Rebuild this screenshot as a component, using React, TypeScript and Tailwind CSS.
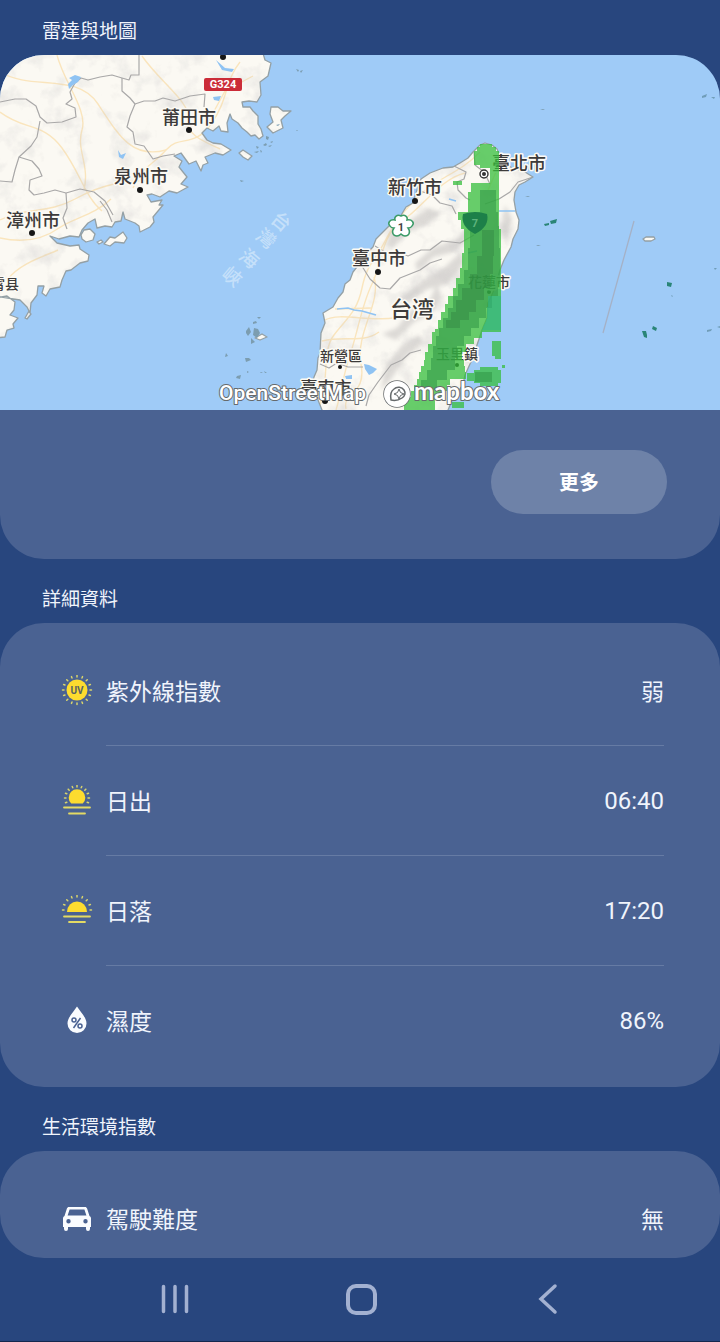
import type { ReactNode } from "react";

const labels = [
  { text: "莆田市", x: 189, y: 124, size: 18 },
  { text: "泉州市", x: 141, y: 183, size: 18 },
  { text: "漳州市", x: 33, y: 227, size: 18 },
  { text: "霄县", x: 5, y: 289, size: 14 },
  { text: "新竹市", x: 415, y: 194, size: 18 },
  { text: "臺中市", x: 379, y: 265, size: 18 },
  { text: "台湾", x: 412, y: 317, size: 22 },
  { text: "新營區", x: 341, y: 361, size: 14 },
  { text: "臺南市", x: 326, y: 394, size: 17 },
  { text: "臺北市", x: 519, y: 170, size: 18 },
  { text: "花蓮市", x: 489, y: 287, size: 14 },
  { text: "玉里鎮", x: 457, y: 359, size: 14 },
];

const dots = [
  [223, 57, 3],
  [189, 130, 3],
  [140, 190, 3],
  [32, 233, 3],
  [415, 201, 3],
  [378, 272, 3],
  [340, 367, 2],
  [325, 401, 3],
  [489, 292, 2],
  [457, 365, 2],
];

const strait = [
  { text: "台", x: 281, y: 222 },
  { text: "灣", x: 266, y: 239 },
  { text: "海", x: 249, y: 259 },
  { text: "峽", x: 232, y: 277 },
];

// rain cells: x, y, width, height
const lightRain = [
  [480, 144, 12, 3], [477, 147, 19, 4], [474, 151, 25, 14], [480, 165, 19, 3],
  [490, 168, 9, 15], [453, 181, 9, 4], [471, 183, 28, 9], [468, 192, 31, 20],
  [458, 212, 41, 8], [461, 220, 38, 9], [464, 229, 37, 24], [462, 253, 39, 15],
  [460, 268, 41, 10], [456, 278, 45, 10], [453, 288, 48, 8], [448, 296, 53, 8],
  [445, 304, 56, 8], [441, 312, 60, 8], [438, 320, 63, 9], [435, 329, 66, 3],
  [432, 332, 50, 6], [432, 338, 42, 6], [428, 344, 38, 8], [425, 352, 37, 8],
  [424, 360, 40, 6], [421, 366, 44, 6], [419, 372, 47, 7], [417, 379, 33, 6],
  [414, 385, 33, 6], [411, 391, 30, 6], [408, 397, 27, 6], [404, 403, 31, 7],
  [492, 341, 9, 15], [495, 356, 6, 3], [474, 370, 27, 13], [467, 373, 7, 8],
  [480, 367, 18, 3], [480, 383, 18, 3], [452, 402, 12, 6], [502, 365, 3, 3],
];

const midRain = [
  [480, 190, 16, 22], [474, 212, 24, 14], [470, 226, 29, 22], [468, 248, 32, 22],
  [464, 270, 36, 14], [458, 284, 40, 12], [453, 296, 39, 12], [448, 308, 38, 10],
  [443, 318, 36, 10], [439, 328, 32, 8], [436, 336, 28, 10], [433, 346, 24, 12],
  [431, 358, 24, 12], [427, 370, 20, 10], [421, 380, 16, 10], [475, 372, 17, 10],
];

const heavyRain = [
  [482, 230, 12, 26], [477, 256, 16, 18], [470, 274, 20, 14], [462, 288, 22, 12],
  [456, 300, 20, 12], [451, 312, 18, 8], [446, 320, 14, 8],
];

const islets = [
  "M296 69l3 1-1 2z", "M300 71l3-1-2 3z", "M266 136l3 1-1 3-2-1z", "M270 142l3-1-1 2z",
  "M256 146l3 1-2 2z", "M260 150l2 1-1 2z", "M240 180l4 1-3 1z", "M276 125l4-1-2 2z",
  "M296 130l2 0-1 1z", "M254 152l5-1-2 2z", "M263 145l3-2 1 2-2 1z", "M268 146l4-1-2 2z",
  "M226 353l2 3-3 1z", "M245 358l4 0 2 2-5 2z", "M237 376l4-1-1 4-4-1z",
  "M247 371l2 1-2 1z", "M260 372l3 0-2 1z", "M264 371l3 2-2 0z",
  "M257 317l4 0-2 2z", "M253 322l3-1 1 2-4 1z", "M246 331l3-4 2 5-3 4-2-3z",
  "M254 328l4 1 2 4-3 5-4-3z", "M251 338l4 4-4 2z",
  "M525 196l5 0-2 1z", "M536 245l5 0-3 1z", "M540 109l5 0-2 1z",
];

const mainland =
  "M-5 50H262L265 60 271 63 268 76 260 82 261 95 257 102 249 101 242 102 243 107 250 107 253 111 258 116 258 124 261 129 263 136 259 139 255 135 251 136 247 132 242 128 238 123 232 119 230 114 227 123 228 132 221 131 219 126 213 131 207 128 202 133 207 140 213 143 221 144 231 150 223 155 215 153 205 157 208 163 203 165 201 171 196 161 189 164 181 153 174 156 182 161 179 167 187 177 181 184 188 187 177 193 169 191 160 197 152 194 147 195 151 202 162 200 159 205 163 205 153 217 154 222 150 227 140 232 139 226 135 223 125 219 123 212 121 221 115 222 112 227 105 226 97 228 95 219 88 223 82 230 79 237 70 236 59 239 50 236 57 243 70 246 79 245 80 249 89 255 88 261 80 263 71 270 66 271 62 280 60 287 50 289 46 296 42 293 44 286 38 286 37 295 31 303 30 313 27 307 20 300 -5 296Z";
const peninsula =
  "M-5 298L7 296 15 302 14 310 10 315 18 318 13 324 14 328 7 330 5 337 -5 338Z";
const taiwan =
  "M485 143L492 145 497 149 502 160 512 168 525 172 533 177 525 182 519 185 515 192 514 200 516 212 519 220 518 229 513 239 511 247 504 260 500 270 495 288 488 303 487 318 482 330 477 345 474 356 470 364 465 375 463 385 453 398 446 415 324 415 318 400 317 393 312 386 314 377 317 370 318 358 320 353 321 333 325 323 323 313 333 307 338 298 343 292 345 284 350 280 353 272 360 263 367 253 373 247 376 239 382 233 390 225 400 217 406 207 413 203 417 190 421 179 430 173 443 168 453 167 460 163 468 158 473 152 480 145Z";
const isles = [
  "M81 235L84 230 90 229 95 234 93 240 86 242 82 239Z",
  "M104 244L110 237 115 238 123 232 127 238 124 243 115 242 110 246Z",
  "M97 242L101 240 103 242 99 244Z",
  "M267 127L273 122 270 114 271 107 278 107 283 111 291 111 285 116 281 120 283 128 273 133Z",
  "M239 153L243 150 252 156 248 160 243 157Z",
  "M25 318L29 311 31 314 27 319Z",
  "M255 338L262 334 267 337 260 340Z",
  "M643 239L646 237 654 237 655 239 651 241 645 241Z",
];
const landPath = [mainland, peninsula, taiwan, ...isles].join("");

const borders = [
  "M139 55V75H131L129 80 122 78 112 75 100 77 88 80 81 78 75 83 70 92 72 99 66 104 75 108 76 117 62 122 47 123 40 117 36 106 26 99 15 99 0 102",
  "M40 121L37 137 31 146 19 157 15 170 12 182 0 181",
  "M19 157L32 161 39 169 42 176 30 180 29 190 34 195 44 193 55 190 66 193 80 189 94 192 105 201 113 215",
  "M122 78L122 91 130 98 135 104 130 116 127 127 133 132 135 144 144 146 153 159 163 156 175 154",
  "M135 104L144 101 155 101 163 98 175 101 190 96 205 94 204 107",
  "M66 193L67 208 63 218 67 229", "M100 201L107 210 112 222",
  "M454 166L466 172 464 179 457 182 458 190 466 198 470 200",
  "M417 190L432 195 440 203 452 206 456 214",
  "M533 177L518 182 510 192 499 199 485 204",
  "M375 246L385 252 398 252 408 256 421 250 430 250 442 241 460 243 474 235",
  "M360 263L370 279 380 288 390 289 400 278 420 270 430 263 442 259",
  "M320 364L329 368 337 363 348 367 363 367",
  "M421 350L410 353 402 360 391 365 378 382 369 395 366 406",
  "M474 152L475 165 484 172 490 184",
];

const roads = [
  "M0 112C25 131 43 122 62 148S85 197 102 211M57 55C64 83 88 110 82 130S90 165 84 190M0 220C25 207 48 214 75 199S128 180 146 181",
  "M240 62C224 82 229 99 211 124S180 134 166 150 141 167 133 188M142 56C160 82 192 104 188 119S205 142 220 149M253 76L225 91 206 126",
  "M0 238C27 244 45 238 59 228S95 215 111 199M8 279C20 263 45 256 58 250M0 72C32 91 77 72 98 104S132 159 166 150",
  "M480 152C460 173 439 177 421 194S394 224 384 243 367 264 362 288 347 318 334 335 330 379 320 405",
  "M465 173C440 179 423 207 402 221S382 264 372 284 358 331 350 355 342 391 336 410M374 277C382 303 355 333 361 364S342 392 346 409",
  "M325 320C342 311 375 325 407 315M322 341C346 335 362 344 379 332M500 163L488 190M335 309L371 308",
];

const ridges = [
  "M390 232L408 222 428 208 441 213 426 225 408 232 393 248 386 245Z",
  "M415 263L434 247 455 241 474 221 475 230 454 252 433 257 418 272Z",
  "M401 298L423 280 444 268 462 251 464 263 448 284 427 289 410 302Z",
  "M382 334L397 328 410 311 430 300 437 284 442 298 430 314 414 322 396 340Z",
  "M386 366L402 345 419 335 423 343 407 356 391 379 381 390Z",
  "M468 352L478 338 482 326 474 355 465 370Z",
  "M505 205L512 219 507 243 501 231Z",
];

function RadarMap() {
  return (
    <svg
      viewBox="0 55 720 355"
      className="block h-auto w-full font-['Roboto','Noto_Sans_CJK_TC',sans-serif]"
      role="img"
      aria-label="雷達與地圖"
    >
      <defs>
        <clipPath id="land">
          <path d={landPath} />
        </clipPath>
        <filter id="relief" x="0" y="0" width="100%" height="100%">
          <feTurbulence type="fractalNoise" baseFrequency="0.045" numOctaves="4" seed="8" />
          <feColorMatrix values="0 0 0 0 0.58  0 0 0 0 0.57  0 0 0 0 0.58  2.6 0 0 0 -1.3" />
        </filter>
        <filter id="soft">
          <feGaussianBlur stdDeviation="2" />
        </filter>
      </defs>
      <rect y="55" width="720" height="355" fill="#9fcbf7" />
      <path d={landPath} fill="#fbf9f3" />
      <g clipPath="url(#land)">
        <g fill="none" stroke="#fae5bd" strokeWidth="1.4">
          {roads.map((d) => (
            <path key={d} d={d} />
          ))}
        </g>
        <g fill="#bdbab9" opacity="0.5" filter="url(#soft)">
          {ridges.map((d) => (
            <path key={d} d={d} />
          ))}
        </g>
        <rect y="55" width="560" height="355" filter="url(#relief)" opacity="0.4" />
        <g fill="none" stroke="#a9a8a8" strokeWidth="1.2" strokeLinejoin="round">
          {borders.map((d) => (
            <path key={d} d={d} />
          ))}
        </g>
        <g fill="#8fc3f3">
          <path d="M69 78l6-3 6 2-3 5-5 3-4 4-1-5 4-4zM118 150l3 5 5-2-3 6-4-2zM213 97l8-1-2 5-5-1zM364 364l5 1 8 4-4 4-4 2-4-6zM345 376l7-1 0 4-6 0zM216 60l9 8 9 1-2 3-10-2z" />
        </g>
        <path d="M337 309l11-1 6 2 8 1 14 4M499 211h16M449 199l7 2M468 253l9-2" fill="none" stroke="#8fc3f3" strokeWidth="1.6" />
      </g>
      <path d={landPath} fill="none" stroke="#94a0a5" strokeWidth="1.3" strokeLinejoin="round" />
      <g fill="#7c9db0">
        {islets.map((d) => (
          <path key={d} d={d} />
        ))}
      </g>
      <path d="M634 221L603 333" stroke="#a5b1c6" strokeWidth="1.3" />

      <g
        fill="#c5e0fa"
        fontSize="19"
        fontWeight="500"
        textAnchor="middle"
        dominantBaseline="central"
      >
        {strait.map((s) => (
          <text key={s.text} x={s.x} y={s.y} transform={`rotate(40 ${s.x} ${s.y})`}>
            {s.text}
          </text>
        ))}
      </g>

      <g>
        {dots.map(([x, y, r]) => (
          <circle key={`${x}-${y}`} cx={x} cy={y} r={r} fill="#161616" />
        ))}
        <circle cx="484" cy="174" r="4" fill="#fff" stroke="#333" strokeWidth="1.4" />
        <circle cx="484" cy="174" r="2" fill="#333" />
      </g>
      <g
        fill="#3d3b3a"
        stroke="#fcfaf4"
        strokeWidth="3"
        strokeLinejoin="round"
        paintOrder="stroke"
        fontWeight="500"
        textAnchor="middle"
      >
        {labels.map((l) => (
          <text key={l.text} x={l.x} y={l.y} fontSize={l.size}>
            {l.text}
          </text>
        ))}
      </g>

      {/* road shields */}
      <rect x="204" y="78" width="38" height="13" rx="2" fill="#cb2c38" />
      <text x="223" y="88" fontSize="11" fontWeight="700" fill="#fff" textAnchor="middle">
        G324
      </text>
      <path
        d="M401 216c4-2 7 1 6 4 5-1 8 3 5 6-1 2-3 2-4 2 3 4 1 8-3 8-2 0-3-1-4-2-1 1-2 2-4 2-4 0-6-4-3-8-1 0-3 0-4-2-3-3 0-7 5-6-1-3 2-6 6-4z"
        fill="#fff"
        stroke="#3c9b68"
        strokeWidth="1.5"
      />
      <text x="401" y="231" fontSize="11" fontWeight="700" fill="#444" textAnchor="middle">
        1
      </text>

      {/* precipitation */}
      <g shapeRendering="crispEdges">
        <g fill="#35bd3c" fillOpacity="0.75">
          {lightRain.map(([x, y, w, h]) => (
            <rect key={`${x}-${y}`} x={x} y={y} width={w} height={h} />
          ))}
        </g>
        <g fill="#2f9645" fillOpacity="0.55">
          {midRain.map(([x, y, w, h]) => (
            <rect key={`${x}-${y}`} x={x} y={y} width={w} height={h} />
          ))}
        </g>
        <g fill="#2f7f40" fillOpacity="0.4">
          {heavyRain.map(([x, y, w, h]) => (
            <rect key={`${x}-${y}`} x={x} y={y} width={w} height={h} />
          ))}
        </g>
        <path d="M488 296H501V330H482L487 318Z" fill="#2fb68a" fillOpacity="0.5" />
      </g>
      <path d="M463 214q12-4 24 0c2 8-2 15-12 20-10-5-14-12-12-20z" fill="#1d8049" />
      <text x="475" y="227" fontSize="11" fontWeight="700" fill="#5db37c" textAnchor="middle">
        7
      </text>
      <g fill="#2a8577">
        <path d="M544 224l5-1 0 2-4 1zM550 221l7-2-1 4-5 1zM667 282l5 1-1 4-4-1zM653 326l4 2-1 3-4-2zM642 331l4 0 1 4 0 3-3-1z" />
      </g>
      <g fill="#709db8">
        <path d="M702 96l5-2-1 3-4 1zM711 97l4 0-1 2zM707 330l5-1-1 2-4 1zM717 327l3-1v2zM714 268l3 0-2 2zM671 295l2 1-1 1z" />
      </g>

      <g
        fill="#fff"
        stroke="#666a6c"
        strokeWidth="2"
        strokeLinejoin="round"
        paintOrder="stroke"
      >
        <a href="#openstreetmap">
          <text x="219" y="400" fontSize="21" fontWeight="500">
            OpenStreetMap
          </text>
        </a>
        <a href="#mapbox">
          <circle cx="397" cy="394" r="13" strokeWidth="1.5" />
          <text x="414" y="400" fontSize="24" fontWeight="700" fontFamily="Lato, sans-serif">
            mapbox
          </text>
        </a>
      </g>
      <path
        d="M391 400c-1-5 0-9 3-11 3-3 8-2 10 1 2 3 1 6-2 8-3 2-7 3-11 2z"
        fill="#fff"
        stroke="#666a6c"
        strokeWidth="1.5"
      />
      <path d="M399 389l1.500 3.500 3.500 1.500-3.500 1.500-1.500 3.500-1.500-3.500-3.500-1.500 3.500-1.500z" fill="none" stroke="#666a6c" />
    </svg>
  );
}

function Rays({ cy, r, from, to }: { cy: number; r: number; from: number; to: number }) {
  const steps = [];
  for (let i = from; i <= to; i++) steps.push(i);
  return (
    <g stroke="#d9d56c" strokeWidth="1.5" strokeLinecap="round">
      {steps.map((i) => (
        <path key={i} d={`M16 ${cy - r}v-1.500`} transform={`rotate(${i * 22.5} 16 ${cy})`} />
      ))}
    </g>
  );
}

function UvIcon() {
  return (
    <svg viewBox="0 0 32 32" className="size-8" aria-hidden="true">
      <Rays cy={15} r={13} from={0} to={15} />
      <circle cx="16" cy="15" r="10.500" fill="#fddc2f" />
      <text
        x="16"
        y="19"
        fontSize="10"
        fontWeight="700"
        fill="#5a6560"
        textAnchor="middle"
        fontFamily="Roboto, sans-serif"
      >
        UV
      </text>
    </svg>
  );
}

function SunriseIcon() {
  return (
    <svg viewBox="0 0 32 32" className="size-8" aria-hidden="true">
      <Rays cy={13} r={11} from={-5} to={5} />
      <path d="M10.200 18.500a8.300 8.300 0 1 1 11.600 0z" fill="#fddc2f" />
      <path d="M3 22.500h26M8 28.500h16" stroke="#e3da64" strokeWidth="1.800" strokeLinecap="round" />
    </svg>
  );
}

function SunsetIcon() {
  return (
    <svg viewBox="0 0 32 32" className="size-8" aria-hidden="true">
      <Rays cy={15} r={13} from={-4} to={4} />
      <path d="M6 17a10 10.500 0 0 1 20 0z" fill="#fddc2f" />
      <path d="M3 21.500h26M8 27h16" stroke="#e3da64" strokeWidth="1.800" strokeLinecap="round" />
    </svg>
  );
}

function HumidityIcon() {
  return (
    <svg viewBox="0 0 32 32" className="size-8" aria-hidden="true">
      <path d="M16 1.500c3.500 5.500 9.500 11 9.500 17a9.500 9.500 0 0 1-19 0c0-6 6-11.500 9.500-17z" fill="#fafcff" />
      <g fill="none" stroke="#4a6292" strokeWidth="1.500">
        <circle cx="13" cy="15" r="2" />
        <circle cx="19" cy="21" r="2" />
        <path d="M19.500 13l-7 10" />
      </g>
    </svg>
  );
}

function CarIcon() {
  return (
    <svg viewBox="0 0 32 32" className="size-8" aria-hidden="true">
      <path
        fillRule="evenodd"
        fill="#fafcff"
        d="M8 4h16c1 0 1.800.6 2.100 1.500L28.500 13c1 .6 1.500 1.500 1.500 2.500V24h-1v2a2 2 0 0 1-4 0v-2H7v2a2 2 0 0 1-4 0v-2H2v-8.500c0-1 .5-1.900 1.500-2.500L5.900 5.500C6.200 4.600 7 4 8 4zM8.600 6.500L6.600 12.500h18.800l-2-6zM7.500 16a2.200 2.200 0 1 0 0 4.400 2.200 2.200 0 0 0 0-4.400zM24.500 16a2.200 2.200 0 1 0 0 4.400 2.200 2.200 0 0 0 0-4.400z"
      />
    </svg>
  );
}

type RowProps = {
  icon: ReactNode;
  label: string;
  value: string;
  word?: boolean;
  last?: boolean;
};

function Row({ icon, label, value, word, last }: RowProps) {
  return (
    <div className="flex items-stretch gap-[13px]">
      <div className="flex w-8 shrink-0 items-center">{icon}</div>
      <div
        className={
          last
            ? "flex h-[109px] flex-1 items-center justify-between"
            : "flex h-[110px] flex-1 items-center justify-between border-b border-[#667ba4]"
        }
      >
        <dt className="pt-1 text-[23px] leading-8">{label}</dt>
        <dd className={word ? "pt-1 text-[23px] leading-8" : "text-2xl leading-8"}>{value}</dd>
      </div>
    </div>
  );
}

function Section({ title, children }: { title: string; children: ReactNode }) {
  return (
    <section>
      <h2 className="pb-[9px] pl-[42px] text-[19px] leading-7">{title}</h2>
      {children}
    </section>
  );
}

export default function App() {
  return (
    <div className="bg-[#28467e] font-['Roboto','Noto_Sans_CJK_TC',sans-serif] text-[#f0f4fc]">
      <main className="flex flex-col gap-[27px] pt-[18px]">
        <Section title="雷達與地圖">
          <div className="overflow-hidden rounded-[44px] bg-[#4a6292]">
            <RadarMap />
            <div className="flex justify-end pt-10 pr-[53px] pb-[45px]">
              <button
                type="button"
                className="h-16 w-44 rounded-full bg-[#6e82a8] pt-0.5 text-xl font-bold text-white"
              >
                更多
              </button>
            </div>
          </div>
        </Section>

        <Section title="詳細資料">
          <dl className="rounded-[44px] bg-[#4a6292] pt-[13px] pr-14 pb-3 pl-[61px]">
            <Row icon={<UvIcon />} label="紫外線指數" value="弱" word />
            <Row icon={<SunriseIcon />} label="日出" value="06:40" />
            <Row icon={<SunsetIcon />} label="日落" value="17:20" />
            <Row icon={<HumidityIcon />} label="濕度" value="86%" last />
          </dl>
        </Section>

        <Section title="生活環境指數">
          <dl className="h-[107px] overflow-hidden rounded-[44px] bg-[#4a6292] pt-[13px] pr-14 pl-[61px]">
            <Row icon={<CarIcon />} label="駕駛難度" value="無" word last />
          </dl>
        </Section>
      </main>

      <nav className="grid h-21 grid-cols-3 border-b border-[#14284f] pr-20 pb-0.5 pl-[82px]">
        <button type="button" aria-label="最近使用" className="flex items-center justify-center">
          <svg viewBox="0 0 32 32" className="size-8" fill="none" stroke="#a3b1d1" strokeWidth="3.500" strokeLinecap="round">
            <path d="M4.500 3.500v25M16 3.500v25M27.500 3.500v25" />
          </svg>
        </button>
        <button type="button" aria-label="主畫面" className="flex items-center justify-center">
          <svg viewBox="0 0 32 32" className="size-8" fill="none" stroke="#a3b1d1" strokeWidth="4">
            <rect x="3" y="3" width="27" height="27" rx="8" />
          </svg>
        </button>
        <button type="button" aria-label="返回" className="flex items-center justify-center">
          <svg viewBox="0 0 32 32" className="size-8" fill="none" stroke="#a3b1d1" strokeWidth="3.500" strokeLinecap="round">
            <path d="M24 3L10 16l14 13" />
          </svg>
        </button>
      </nav>
    </div>
  );
}
